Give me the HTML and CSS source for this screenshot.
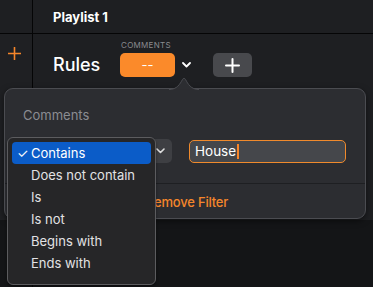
FILE: index.html
```html
<!DOCTYPE html>
<html lang="en">
<head>
    <meta charset="UTF-8">
    <meta name="viewport" content="width=device-width, initial-scale=1.0">
    <title>Playlist Rules</title>
    <link rel="stylesheet" href="styles.css">
</head>
<body>
    <div class="app">
        <div class="side side-head"></div>
        <div class="head">Playlist 1</div>

        <div class="side side-main">
            <svg class="add-rule" width="13" height="13" viewBox="0 0 13 13">
                <path d="M6.5 0.5 V12.5 M0.5 6.5 H12.5" stroke="#f7862a" stroke-width="1.6" stroke-linecap="round"/>
            </svg>
        </div>
        <div class="main">
            <div class="rules-row">
                <span class="rules-title">Rules</span>
                <div class="field-pick">
                    <span class="field-label">COMMENTS</span>
                    <button class="field-btn">--</button>
                </div>
                <svg class="chevron" width="9" height="6" viewBox="0 0 9 6">
                    <path d="M1 1 L4.5 4.5 L8 1" fill="none" stroke="#fff" stroke-width="1.8" stroke-linecap="round" stroke-linejoin="round"/>
                </svg>
                <button class="plus-btn">
                    <svg width="15" height="15" viewBox="0 0 15 15">
                        <path d="M7.5 1 V14 M1 7.5 H14" stroke="#fff" stroke-width="2" stroke-linecap="round"/>
                    </svg>
                </button>
            </div>
        </div>

        <div class="side side-foot"></div>
        <div class="foot"></div>
    </div>

    <!-- filter popover -->
    <div class="popover">
        <svg class="popover-arrow" width="30" height="13" viewBox="0 0 30 13">
            <path d="M0 12.5 C8 12.5 11 7 13.5 2.5 C14.3 1 15.7 1 16.5 2.5 C19 7 22 12.5 30 12.5" fill="#2c2d31" stroke="#4b4c51" stroke-width="1"/>
        </svg>
        <div class="popover-title">Comments</div>
        <div class="filter-row">
            <div class="op-btn">
                <svg width="9" height="6" viewBox="0 0 9 6">
                    <path d="M1 1 L4.5 4.5 L8 1" fill="none" stroke="#ddd" stroke-width="1.6" stroke-linecap="round" stroke-linejoin="round"/>
                </svg>
            </div>
            <div class="text-field">House<span class="caret"></span></div>
        </div>
        <div class="popover-foot">Remove Filter</div>
    </div>

    <!-- operator menu -->
    <div class="menu">
        <div class="menu-item selected"><span class="check">✓</span>Contains</div>
        <div class="menu-item">Does not contain</div>
        <div class="menu-item">Is</div>
        <div class="menu-item">Is not</div>
        <div class="menu-item">Begins with</div>
        <div class="menu-item">Ends with</div>
    </div>
</body>
</html>
```

FILE: styles.css
```css
body {
    margin: 0;
    padding: 0;
    font-family: Inter, "Noto Sans", sans-serif;
    font-size: 13px;
    color: #FFFFFF;
    background-color: #141517;
    width: 373px;
    height: 287px;
    overflow: hidden;
    position: relative;
}

button {
    font-family: inherit;
    border: none;
    color: #FFFFFF;
    padding: 0;
}

.app {
    display: grid;
    grid-template-columns: 33px 1fr;
    grid-template-rows: 34px 186px 1fr;
    height: 287px;
}

.side {
    border-right: 1px solid #050506;
}

.side-head,
.head {
    background-color: #1e1f22;
    border-bottom: 1px solid #050506;
}

.side-main {
    background-color: #1f2023;
    display: flex;
    justify-content: center;
}

.side-foot,
.foot {
    background-color: #141517;
}

.head {
    display: flex;
    align-items: center;
    padding-left: 20px;
    font-weight: 700;
    font-size: 13px;
}

.main {
    background-color: #1e1f22;
}

.add-rule {
    margin-top: 13px;
    margin-left: -3px;
}

.rules-row {
    display: flex;
    align-items: flex-end;
    padding-left: 20px;
    padding-top: 6px;
}

.rules-title {
    font-size: 18px;
    font-weight: 500;
    width: 67px;
    line-height: 22px;
    margin-bottom: 1px;
}

.field-pick {
    display: flex;
    flex-direction: column;
}

.field-label {
    font-size: 8px;
    color: #8a8b8f;
    letter-spacing: 0.3px;
    margin-bottom: 3px;
    margin-left: 1px;
}

.field-btn {
    width: 55px;
    height: 24px;
    border-radius: 5px;
    background-color: #fb8a2a;
    font-size: 13px;
}

.chevron {
    margin: 0 0 9px 7px;
}

.plus-btn {
    width: 39px;
    height: 24px;
    margin-left: 22px;
    border-radius: 5px;
    background-color: #48494d;
    display: flex;
    align-items: center;
    justify-content: center;
}

.popover {
    position: absolute;
    left: 4px;
    top: 88px;
    width: 360px;
    height: 129px;
    background-color: #2c2d31;
    border: 1px solid #4b4c51;
    border-radius: 9px;
    box-shadow: 0 2px 6px rgba(0,0,0,0.5);
}

.popover-arrow {
    position: absolute;
    left: 164px;
    top: -12px;
}

.popover-title {
    color: #8b8c91;
    padding: 18px 0 0 18px;
    height: 20px;
}

.filter-row {
    display: flex;
    align-items: center;
    margin-top: 12px;
    height: 24px;
}

.op-btn {
    width: 60px;
    height: 24px;
    margin-left: 107px;
    background-color: #3e3f43;
    border-radius: 5px;
    display: flex;
    align-items: center;
    justify-content: flex-end;
    padding-right: 7px;
    box-sizing: border-box;
}

.text-field {
    margin-left: 17px;
    width: 157px;
    height: 23px;
    box-sizing: border-box;
    border: 1.5px solid #f08a2c;
    border-radius: 5px;
    background-color: #45474b;
    display: flex;
    align-items: center;
    padding-left: 5px;
    font-size: 13.5px;
}

.caret {
    display: inline-block;
    width: 2px;
    height: 15px;
    background-color: #f7862a;
    margin-left: 1px;
}

.popover-foot {
    margin-top: 20px;
    border-top: 1px solid #1e1f22;
    padding: 10px 0 0 141px;
    color: #f5862b;
    font-weight: 500;
    font-size: 13px;
    letter-spacing: -0.2px;
}

.menu {
    position: absolute;
    left: 7px;
    top: 137px;
    width: 139px;
    height: 138px;
    background-color: #262628;
    border: 1px solid #5c5c5f;
    border-radius: 6px;
    box-shadow: 0 2px 3px rgba(0,0,0,0.4);
    padding: 4px 4px;
}

.menu-item {
    height: 22px;
    line-height: 22px;
    padding-left: 19px;
    color: #e2e2e4;
    border-radius: 4px;
    position: relative;
    font-size: 13px;
}

.menu-item.selected {
    background-color: #0b5cc8;
    color: #FFFFFF;
}

.check {
    position: absolute;
    left: 5px;
    font-size: 13px;
}
```
